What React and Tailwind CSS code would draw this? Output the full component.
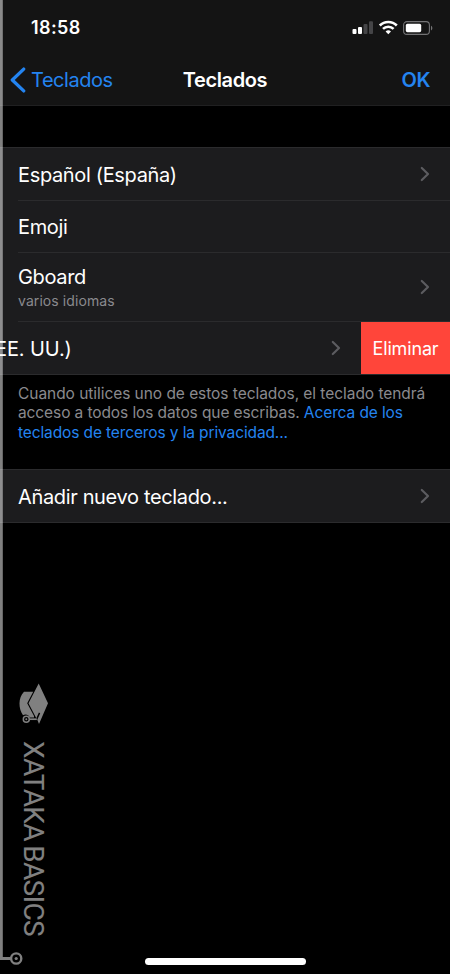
import clsx from "clsx";

function Chevron({ className }) {
  return (
    <svg viewBox="0 0 10 16" className={clsx("w-[10px] h-4 shrink-0", className)} fill="none">
      <path d="M1.8 2 8 8 1.8 14" stroke="#5c5c60" strokeWidth="2.2" strokeLinecap="round" strokeLinejoin="round" />
    </svg>
  );
}

function StatusBar() {
  return (
    <div className="h-[54px] flex items-start justify-between pl-[31px] pr-[17px]">
      <span className="mt-[15px] text-[18px] leading-[26px] font-semibold tracking-[0.4px]">18:58</span>
      <svg viewBox="0 0 82 16" className="w-[82px] h-4 mt-5">
        <rect x="1.5" y="9" width="4" height="5" rx="1" fill="#fff" />
        <rect x="7" y="7" width="4" height="7" rx="1" fill="#fff" />
        <rect x="12.5" y="4" width="4" height="10" rx="1" fill="#454547" />
        <rect x="18" y="1.2" width="4" height="12.8" rx="1" fill="#454547" />
        <g fill="none" stroke="#fff" strokeWidth="2.6">
          <path d="M28.8 5.5a12 12 0 0 1 17 0" />
          <path d="M32 8.9a7.6 7.6 0 0 1 10.6 0" />
        </g>
        <path d="M34.6 11.4a4 4 0 0 1 5.4 0L37.3 14.2z" fill="#fff" />
        <rect x="52.6" y="1.6" width="25.8" height="12.8" rx="3.4" fill="none" stroke="#737375" strokeWidth="1.1" />
        <rect x="54.8" y="3.8" width="15.4" height="8.4" rx="1.6" fill="#fff" />
        <path d="M80 5.7c1.8.7 1.8 4 0 4.7z" fill="#737375" />
      </svg>
    </div>
  );
}

function NavBar() {
  return (
    <div className="h-[51px] grid grid-cols-[1fr_auto_1fr] items-center px-[10px] text-[20px] leading-6">
      <div className="flex items-center text-[#2484f0]">
        <svg viewBox="0 0 16 26" className="w-4 h-[26px] mr-[5px]" fill="none">
          <path d="M13.7 2.1 2.3 13l11.4 10.9" stroke="currentColor" strokeWidth="3.3" strokeLinecap="round" strokeLinejoin="round" />
        </svg>
        <span className="tracking-[-0.45px]">Teclados</span>
      </div>
      <span className="font-semibold tracking-[-0.4px]">Teclados</span>
      <span className="justify-self-end pr-[10px] font-semibold text-[#2484f0] tracking-[-0.5px]">OK</span>
    </div>
  );
}

function Row({ label, detail, arrow, last, height = "h-[52px]" }) {
  return (
    <div className={clsx("pl-[18px]", height)}>
      <div className={clsx("h-full flex items-center justify-between pr-5 border-[#2b2b2d]", !last && "border-b")}>
        <div className="pt-px">
          <p className="text-[20px] leading-6 tracking-[-0.35px]">{label}</p>
          {detail && <p className="mt-[2px] text-[14px] leading-5 tracking-[0.08px] text-[#8a8a8e]">{detail}</p>}
        </div>
        {arrow && <Chevron />}
      </div>
    </div>
  );
}

function SwipedRow() {
  return (
    <div className="h-[52px] flex">
      <div className="w-[361px] flex items-center justify-between pr-5">
        <span className="-ml-[5px] pt-px text-[20px] tracking-[-0.1px]">EE. UU.)</span>
        <Chevron />
      </div>
      <button className="w-[89px] bg-[#ff453a] text-[18px] tracking-[-0.15px]">Eliminar</button>
    </div>
  );
}

function Watermark() {
  return (
    <div className="absolute inset-y-0 left-0 w-14 opacity-50 pointer-events-none">
      <svg viewBox="0 0 56 974" className="absolute inset-0 w-14 h-[974px]" fill="none">
        <path d="M1.4 0v958.5H11" stroke="#fff" strokeWidth="2.8" />
        <circle cx="16.2" cy="958.5" r="5.1" stroke="#fff" strokeWidth="2.4" />
        <circle cx="16.2" cy="958.5" r="1.6" fill="#fff" />
        {/* graduation cap */}
        <path d="M24 691.800h9.200l-6 11.500 6.800 12.700v1.500h-4.200a4.600 4.600 0 0 0-6.800-2.200c-4.600-6.500-5-17.500 1-23.500z" fill="#fff" />
        <path d="M38.700 683.500 48 703.300l-9 20.700-1.700-4.200 2.900-6.600-1.300-.6-2.600 5.600-7.800-14.900z" fill="#fff" />
        <path d="M30 719.200h6.800" stroke="#fff" strokeWidth="1.700" />
        <circle cx="26.300" cy="719.200" r="3" stroke="#fff" strokeWidth="1.500" />
        <circle cx="26.300" cy="719.200" r="1" fill="#fff" />
      </svg>
      <span className="absolute left-[17px] top-[741px] [writing-mode:vertical-rl] font-['Roboto',sans-serif] text-[28px] leading-8 tracking-[-0.65px] [word-spacing:-2px] whitespace-nowrap">
        XATAKA BASICS
      </span>
    </div>
  );
}

export default function App() {
  return (
    <div className="relative w-[450px] h-[974px] overflow-hidden bg-black text-white font-['Inter',sans-serif] flex flex-col">
      <header className="bg-[#141414] border-b border-[#202021]">
        <StatusBar />
        <NavBar />
      </header>

      <main className="flex-1 pt-[41px]">
        <section className="bg-[#1c1c1e] border-y border-[#2b2b2d]">
          <Row label="Español (España)" arrow height="h-[53px]" />
          <Row label="Emoji" />
          <Row label="Gboard" detail="varios idiomas" arrow height="h-[69px]" />
          <SwipedRow />
        </section>

        <p className="pl-[18px] pt-[9px] h-[94px] text-[15.5px] leading-[19.3px] tracking-[-0.05px] whitespace-nowrap text-[#8a8a8e]">
          Cuando utilices uno de estos teclados, el teclado tendrá
          <br />
          <span className="tracking-[-0.1px]">
            acceso a todos los datos que escribas. <a className="text-[#2484f0]">Acerca de los</a>
          </span>
          <br />
          <a className="text-[#2484f0] tracking-[-0.12px]">teclados de terceros y la privacidad...</a>
        </p>

        <section className="bg-[#1c1c1e] border-y border-[#2b2b2d]">
          <Row label="Añadir nuevo teclado..." arrow last />
        </section>
      </main>

      <div className="mx-auto mb-[9px] w-[161px] h-[7px] rounded-full bg-white" />

      <Watermark />
    </div>
  );
}
